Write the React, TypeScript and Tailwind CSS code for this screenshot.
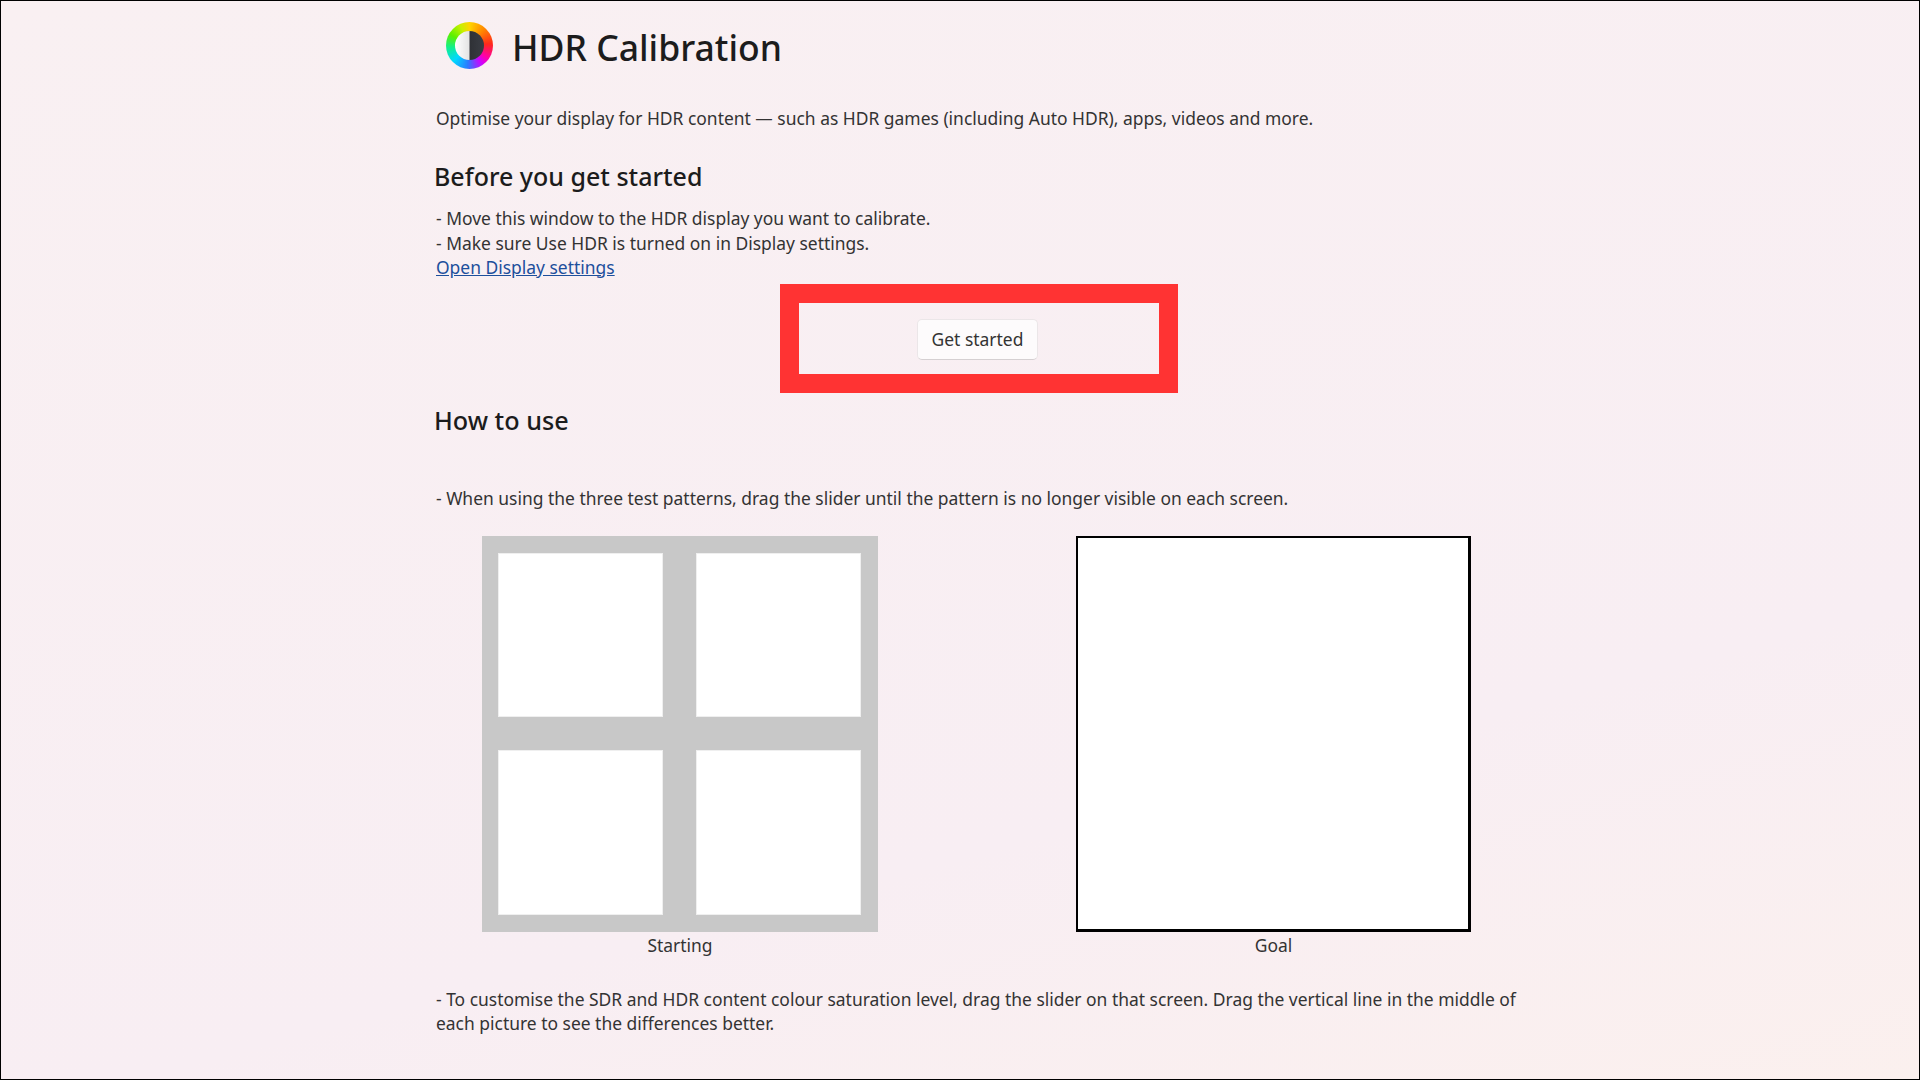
const Logo = () => {
  return (
    <div className="w-[47px] h-[47px] rounded-full flex items-center justify-center blur-[0.6px] bg-[conic-gradient(#ffd400_0deg,#ff8a00_40deg,#ff2a1a_85deg,#ff00a8_125deg,#d000ff_145deg,#2a7bff_185deg,#00d8ff_225deg,#12f08a_265deg,#5cf000_300deg,#c8f000_335deg,#ffd400_360deg)]">
      <div className="w-[29px] h-[29px] rounded-full bg-[linear-gradient(90deg,#ffffff_0%,#e4e4e4_49%,#2f3136_51%,#3a3d44_100%)]" />
    </div>
  );
};

const StartingPattern = () => {
  return (
    <div className="w-[396px] h-[396px] bg-[#c8c8c8] px-4 pt-[17px] grid grid-cols-[165px_165px] grid-rows-[164px_165px] gap-[33px]">
      <div className="bg-white border border-[#efefef]" />
      <div className="bg-white border border-[#efefef]" />
      <div className="bg-white border border-[#efefef]" />
      <div className="bg-white border border-[#efefef]" />
    </div>
  );
};

const App = () => {
  return (
    <div className="w-full h-screen overflow-hidden border border-black bg-[linear-gradient(165deg,#f9f0f2_0%,#f8eef3_70%,#fbf0ee_100%)] font-['Noto_Sans','Open_Sans',sans-serif] text-[#333333] text-[17.45px] leading-[24.5px]">
      <div className="w-[1086px] ml-[435px] pt-[21px]">
        <div className="flex items-center gap-[19px] ml-[10px] h-[47px]">
          <Logo />
          <h1 className="pt-[4px] text-[35.5px] font-medium leading-[47px] text-[#1c1c1c]">
            HDR Calibration
          </h1>
        </div>

        <p className="mt-[37px]">
          Optimise your display for HDR content — such as HDR games (including
          Auto HDR), apps, videos and more.
        </p>

        <h2 className="mt-[27px] -ml-[2px] text-[25px] font-medium leading-[36px] text-[#1c1c1c]">
          Before you get started
        </h2>
        <div className="mt-[12px]">
          <p>- Move this window to the HDR display you want to calibrate.</p>
          <p className="mt-px">- Make sure Use HDR is turned on in Display settings.</p>
          <a href="#" className="-mt-px block text-[#1d4f9c] underline">
            Open Display settings
          </a>
        </div>

        <div className="mt-[5px] flex justify-center">
          <div className="w-[398px] h-[109px] border-[19px] border-[#ff3333] flex items-center justify-center">
            <button className="mr-[3px] mt-[2px] w-[121px] h-[41px] rounded-[5px] bg-[#fdfbfc] border border-[#ebe6e8] border-b-[#d5d0d2] text-[17.45px] text-[#333333]">
              Get started
            </button>
          </div>
        </div>

        <h2 className="mt-[9px] -ml-[2px] text-[25.2px] font-medium leading-[36px] text-[#1c1c1c]">
          How to use
        </h2>
        <p className="mt-[48px]">
          - When using the three test patterns, drag the slider until the
          pattern is no longer visible on each screen.
        </p>

        <div className="mt-[25px] ml-[46px] flex gap-[198px]">
          <div className="flex flex-col items-center">
            <StartingPattern />
            <span className="mt-[1px]">Starting</span>
          </div>
          <div className="flex flex-col items-center">
            <div className="w-[395px] h-[396px] bg-white border-2 border-r-[3px] border-b-[3px] border-black" />
            <span className="mt-[1px]">Goal</span>
          </div>
        </div>

        <p className="mt-[30px] leading-[24px]">
          - To customise the SDR and HDR content colour saturation level, drag
          the slider on that screen. Drag the vertical line in the middle of
          each picture to see the differences better.
        </p>
      </div>
    </div>
  );
};

export default App;
